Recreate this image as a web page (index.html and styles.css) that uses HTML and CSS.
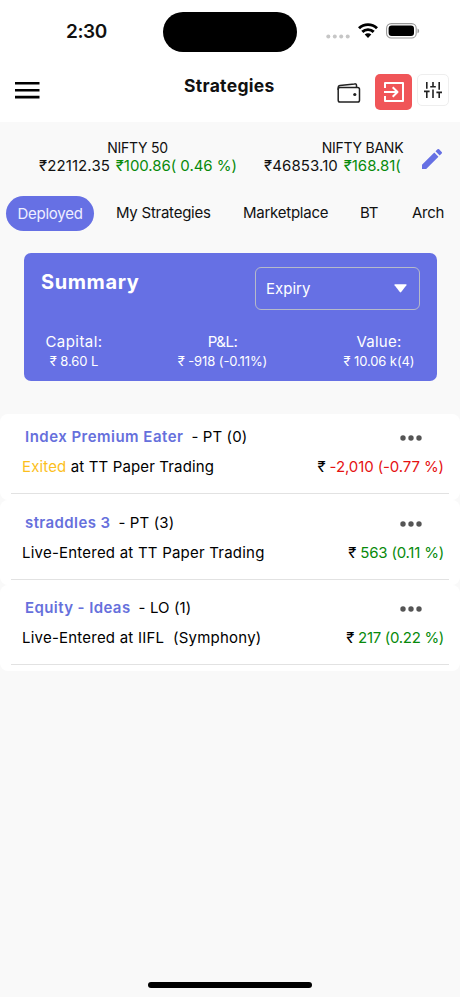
FILE: index.html
```html
<!DOCTYPE html>
<html lang="en">
<head>
<meta charset="utf-8">
<meta name="viewport" content="width=device-width, initial-scale=1">
<title>Strategies</title>
<link rel="stylesheet" href="styles.css">
</head>
<body>
<div class="screen">
  <div class="top">
    <div class="status">
      <span class="time">2:30</span>
      <span class="island"></span>
      <div class="signals">
        <svg class="cell" width="24" height="5" viewBox="0 0 24 5" fill="#c6c6c6"><circle cx="2.3" cy="2.5" r="2"/><circle cx="8.8" cy="2.5" r="2"/><circle cx="15.2" cy="2.5" r="2"/><circle cx="21.7" cy="2.5" r="2"/></svg>
        <svg class="wifi" width="20" height="15" viewBox="0 0 20 15" fill="none" stroke="#000" stroke-width="2.9"><path d="M1 5.2a13 13 0 0 1 18 0"/><path d="M4.3 8.9a8.2 8.2 0 0 1 11.4 0"/><path d="M10 15 6.7 11.600a4.700 4.700 0 0 1 6.600 0z" fill="#000" stroke="none"/></svg>
        <svg width="34" height="16" viewBox="0 0 34 16"><rect x=".6" y=".6" width="29.6" height="14.4" rx="4.6" fill="#fff" stroke="#999" stroke-width="1.1"/><rect x="2.6" y="2.5" width="25.4" height="10.6" rx="3"/><path d="M31.5 5.5c2.2.8 2.2 4 0 4.800z" fill="#999"/></svg>
      </div>
    </div>
    <header class="bar">
      <svg class="menu" width="25" height="17" viewBox="0 0 25 17"><path d="M0 0h24.500v2.600H0zM0 7h24.500v2.600H0zM0 13.800h24.500v2.600H0z"/></svg>
      <h1>Strategies</h1>
      <svg class="wallet" width="24" height="22" viewBox="0 0 24 22" fill="none" stroke="#222" stroke-width="1.5" stroke-linejoin="round"><rect x="1.200" y="5.500" width="21.300" height="14.500" rx="1.800"/><path d="M1.200 8V5.300c0-1.100.7-1.600 1.700-1.800L17.500 1.900c1.300-.2 2 .4 2 1.500v2.100"/><circle cx="17.800" cy="12.500" r="1.600" fill="#222" stroke="none"/></svg>
      <span class="exit"><svg width="20" height="20" viewBox="0 0 20 20" fill="none" stroke="#fff" stroke-width="2" stroke-linejoin="round"><path d="M1 6V1h18v18H1v-5M0 10h13M8.700 5.200 13.500 10l-4.800 4.800"/></svg></span>
      <span class="filter"><svg width="18" height="16" viewBox="0 0 18 16" fill="none" stroke="#222" stroke-width="1.600"><path d="M2.800 0v6.800M0 9.400h5.600M2.800 9.400V16M9 0v4.800M6.200 4.800h5.600M9 7.400V16M15.200 0v7.800M12.400 10.400H18M15.200 10.400V16"/></svg></span>
    </header>
  </div>

  <section class="quotes">
    <div class="tape">
      <div class="quote"><div class="index">NIFTY 50</div><div class="price">₹22112.35 <span class="up">₹100.86( 0.46 %)</span></div></div>
      <div class="quote"><div class="index">NIFTY BANK</div><div class="price">₹46853.10 <span class="up">₹168.81(</span></div></div>
    </div>
    <svg class="pencil" width="20" height="20" viewBox="3 3 18 18" fill="#6670e4"><path d="M3 17.250V21h3.750L17.810 9.940l-3.750-3.750L3 17.250zM20.710 7.040a1 1 0 0 0 0-1.410l-2.340-2.340a1 1 0 0 0-1.410 0l-1.830 1.830 3.750 3.750 1.830-1.830z"/></svg>
  </section>

  <nav class="tabs">
    <a class="active">Deployed</a><a class="t2">My Strategies</a><a class="t3">Marketplace</a><a class="t4">BT</a><a class="t5">Arch</a>
  </nav>

  <section class="summary">
    <div class="summary-head">
      <h2>Summary</h2>
      <div class="select"><span>Expiry</span><svg width="13" height="9" viewBox="0 0 13 9" fill="#fff"><path d="M1 .3h11q1 .1.400 1L7.200 8q-.7.900-1.400 0L.6 1.300Q0 .4 1 .3z"/></svg></div>
    </div>
    <div class="stats">
      <div class="stat s1"><div>Capital:</div><small>₹ 8.60 L</small></div>
      <div class="stat s2"><div>P&amp;L:</div><small>₹ -918 (-0.11%)</small></div>
      <div class="stat s3"><div>Value:</div><small>₹ 10.06 k(4)</small></div>
    </div>
  </section>

  <main class="list">
    <article class="item">
      <div class="row title"><span><b class="n1">Index Premium Eater</b><span class="kind">- PT (0)</span></span><svg class="dots" width="22" height="6" viewBox="0 0 22 6"><circle cx="3" cy="3" r="2.700"/><circle cx="11" cy="3" r="2.700"/><circle cx="19" cy="3" r="2.700"/></svg></div>
      <div class="row"><span class="d1"><span class="exited">Exited</span> at TT Paper Trading</span><span class="v1">₹ <span class="down">-2,010 (-0.77 %)</span></span></div>
    </article>
    <article class="item">
      <div class="row title"><span><b class="n2">straddles 3</b><span class="kind">- PT (3)</span></span><svg class="dots" width="22" height="6" viewBox="0 0 22 6"><circle cx="3" cy="3" r="2.700"/><circle cx="11" cy="3" r="2.700"/><circle cx="19" cy="3" r="2.700"/></svg></div>
      <div class="row"><span class="d2">Live-Entered at TT Paper Trading</span><span class="v2">₹ <span class="up">563 (0.11 %)</span></span></div>
    </article>
    <article class="item">
      <div class="row title"><span><b class="n3">Equity - Ideas</b><span class="kind">- LO (1)</span></span><svg class="dots" width="22" height="6" viewBox="0 0 22 6"><circle cx="3" cy="3" r="2.700"/><circle cx="11" cy="3" r="2.700"/><circle cx="19" cy="3" r="2.700"/></svg></div>
      <div class="row"><span class="d2">Live-Entered at IIFL &nbsp;(Symphony)</span><span class="v3">₹ <span class="up">217 (0.22 %)</span></span></div>
    </article>
  </main>
  <div class="home"></div>
</div>
</body>
</html>
```
FILE: styles.css
```css
* { box-sizing: border-box; }
body { margin: 0; background: #f9f9f9; color: #111; font-family: Inter, "Noto Sans", sans-serif; font-size: 15px; }
.screen { width: 460px; height: 997px; display: flex; flex-direction: column; overflow: hidden; }
.top { height: 122px; background: #fff; flex: none; }
.status { height: 62px; display: grid; grid-template-columns: 163px 134px 163px; }
.time { padding: 20px 0 0 66px; font-size: 19px; line-height: 24px; font-weight: 600; letter-spacing: -.4px; }
.island { margin-top: 12px; height: 40px; border-radius: 20px; background: #000; }
.signals { display: flex; align-items: flex-start; padding: 23px 0 0 29px; }
.cell { margin-top: 11px; }
.wifi { margin: 0 8px 0 8px; }
.bar { height: 60px; display: flex; align-items: flex-start; padding-left: 15px; }
.menu { margin-top: 20px; }
h1 { margin: 11px 0 0 144px; width: 92px; font-size: 17.5px; line-height: 26px; font-weight: 700; letter-spacing: .3px; white-space: nowrap; }
.wallet { margin: 20px 0 0 61px; }
.exit { margin: 12px 0 0 14px; width: 37px; height: 36px; border-radius: 5px; background: #f05558; display: grid; place-items: center; }
.filter { margin: 12px 0 0 5px; width: 32px; height: 32px; border-radius: 5px; border: 1px solid #eee; display: grid; place-items: center; }
.up { color: #078a0b; }
.down { color: #e51212; }
.quotes { height: 68px; display: flex; padding: 17px 0 0 39px; flex: none; }
.tape { width: 365px; display: flex; gap: 28px; overflow: hidden; white-space: nowrap; font-size: 14px; line-height: 18px; }
.quote { width: 197px; flex: none; text-align: center; }
.index { letter-spacing: -.25px; }
.price { font-size: 15px; line-height: 17px; text-align: left; letter-spacing: .1px; }
.price .up { margin-left: 1.500px; letter-spacing: -.05px; }
.pencil { margin: 10px 0 0 18px; }
.tabs { height: 63px; padding: 6px 0 0 6px; display: flex; line-height: 33px; letter-spacing: -.25px; white-space: nowrap; overflow: hidden; flex: none; }
.active { width: 88px; height: 35px; line-height: 35px; border-radius: 18px; background: #6670e4; color: #eef; text-align: center; }
.tabs .t2 { margin-left: 22px; width: 127px; }
.tabs .t3 { width: 117px; }
.tabs .t4 { width: 52px; }
.summary { margin: 0 23px 0 24px; height: 128px; background: #6670e4; border-radius: 7px; color: #fff; padding: 14px 17px 0; flex: none; }
.summary-head { display: flex; justify-content: space-between; height: 65px; }
h2 { margin: 0; font-size: 20px; line-height: 31px; font-weight: 700; letter-spacing: .6px; }
.select { width: 165px; height: 43px; border: 1px solid #b6bac9; border-radius: 6px; padding: 0 12px 0 10px; display: flex; align-items: center; justify-content: space-between; }
.stats { display: flex; justify-content: space-between; text-align: center; line-height: 20px; }
.stat { white-space: nowrap; }
.stat small { display: block; font-size: 13px; line-height: 18px; letter-spacing: -.1px; }
.s1 { width: 66px; letter-spacing: .45px; }
.s2 { width: 90px; margin-right: 5px; letter-spacing: -.5px; }
.s3 { width: 72px; margin-right: 5px; letter-spacing: .25px; }
.list { margin-top: 33px; flex: none; }
.item { height: 85.500px; background: #fff; border-radius: 8px; padding: 11px 16px 0 22px; position: relative; }
.item::after { content: ""; position: absolute; left: 11px; right: 11px; top: 79px; height: 1px; background: #e2e2e2; }
.row { display: flex; justify-content: space-between; line-height: 24px; height: 24px; white-space: nowrap; color: #000; }
.title { margin-bottom: 6px; padding: 0 22px 0 3px; align-items: center; }
b { color: #6670dc; font-weight: 600; margin-right: 8px; letter-spacing: .4px; }
.n1 { letter-spacing: .48px; }
.kind { letter-spacing: .12px; }
.d1 { letter-spacing: .14px; }
.d2 { letter-spacing: .22px; }
.v1 { letter-spacing: -.1px; }
.v2 { letter-spacing: -.2px; }
.v3 { letter-spacing: -.3px; }
.dots { fill: #555; margin-top: 2px; }
.exited { color: #fcbf1e; }
.home { width: 164px; height: 6px; border-radius: 3px; background: #000; margin: auto auto 9px 148px; flex: none; }
```
